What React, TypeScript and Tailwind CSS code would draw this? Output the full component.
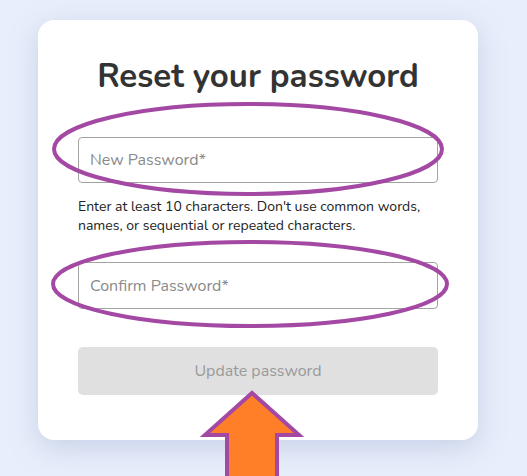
import { useState } from "react";

const font = { fontFamily: "Nunito, Lato, 'Noto Sans', sans-serif" };

const ResetPassword = () => {
    const [inputs, setInputs] = useState({
        password: '',
        confirm: ''
    });

    return (
        <div className="min-h-[476px] w-[527px] bg-[#e8eefb] pl-[38px] pt-[20px] relative overflow-hidden" style={font}>
            <div className="w-[440px] bg-white rounded-[16px] shadow-[0_8px_28px_rgba(140,155,195,0.35)] px-[40px] pt-[38px] pb-[45px] flex flex-col">
                <h1 className="text-[33px] leading-[38px] font-bold text-[#333333] text-center">Reset your password</h1>

                <input type="password" value={inputs.password} placeholder="New Password*"
                    onChange={(e) => setInputs({...inputs, password: e.target.value})}
                    className="mt-[41px] h-[46px] w-full border border-[#a3a3a3] rounded-[4px] px-[11px] text-[16px] text-[#333] placeholder:text-[#8a8a8a] outline-none"/>

                <p className="mt-[14px] text-[14px] leading-[19px] text-[#222222]">
                    Enter at least 10 characters. Don't use common words, names, or sequential or repeated characters.
                </p>

                <input type="password" value={inputs.confirm} placeholder="Confirm Password*"
                    onChange={(e) => setInputs({...inputs, confirm: e.target.value})}
                    className="mt-[27px] h-[47px] w-full border border-[#a3a3a3] rounded-[4px] px-[11px] text-[16px] text-[#333] placeholder:text-[#8a8a8a] outline-none"/>

                <button disabled className="mt-[38px] h-[48px] w-full bg-[#e0e0e0] rounded-[5px] text-[16px] text-[#9a9a9a]">
                    Update password
                </button>
            </div>

            {/* annotation marks drawn over the screenshot */}
            <svg className="absolute left-0 top-0 pointer-events-none" width="527" height="476">
                <ellipse cx="248" cy="149" rx="194" ry="45" fill="none" stroke="#a349a4" strokeWidth="4"/>
                <ellipse cx="250" cy="284" rx="197" ry="42" fill="none" stroke="#a349a4" strokeWidth="4"/>
                <polygon points="252,393 299,435 277,435 277,480 227,480 227,435 205,435"
                    fill="#fe7f27" stroke="#a349a4" strokeWidth="4" strokeLinejoin="miter"/>
            </svg>
        </div>
     );
}

export default ResetPassword;
